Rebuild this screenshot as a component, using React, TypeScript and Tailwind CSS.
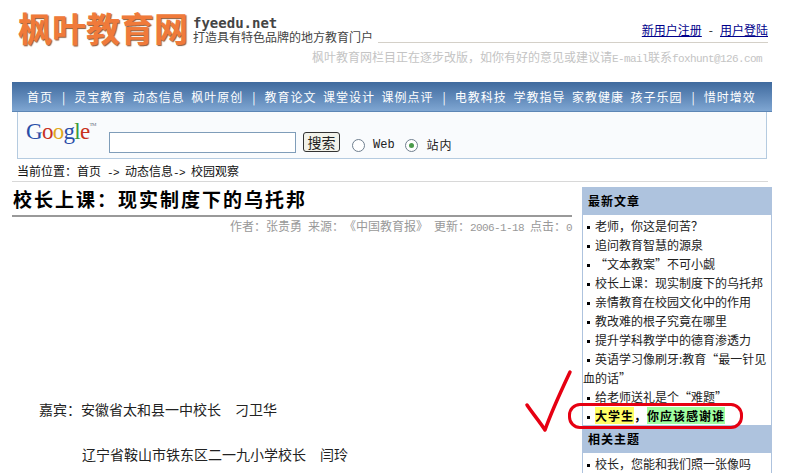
const cjk = "font-['SimSun','Noto_Sans_CJK_SC',sans-serif]";

const navGroups = [
  ["首页"],
  ["灵宝教育", "动态信息", "枫叶原创"],
  ["教育论文", "课堂设计", "课例点评"],
  ["电教科技", "学教指导", "家教健康", "孩子乐园"],
  ["惜时增效"],
];

const latest = [
  "老师，你这是何苦？",
  "追问教育智慧的源泉",
  "“文本教案”不可小觑",
  "校长上课：现实制度下的乌托邦",
  "亲情教育在校园文化中的作用",
  "教改难的根子究竟在哪里",
  "提升学科教学中的德育渗透力",
  "英语学习像刷牙:教育“最一针见血的话”",
  "给老师送礼是个“难题”",
];

// half-width latin, 6px per character like the old bitmap font
function M({ children }: { children: string }) {
  return <span className="whitespace-pre font-['Liberation_Mono',monospace] text-[11px] leading-none tracking-[-0.6px]">{children}</span>;
}

function Bullet() {
  return <span className="mr-[5px] ml-[4px] inline-block h-[3px] w-[3px] bg-black align-middle" />;
}

function Radio({ checked }: { checked?: boolean }) {
  return (
    <span className="flex h-[13px] w-[13px] items-center justify-center rounded-full border border-[#6f7f8f] bg-white">
      {checked && <span className="h-[5px] w-[5px] rounded-full bg-[#4a9a4a]" />}
    </span>
  );
}

function Google() {
  return (
    <div className="flex w-[70px] items-start font-['Liberation_Serif',serif] text-[23px] leading-[28px] tracking-[-0.7px]">
      <span className="text-[#2a4fa8]">G</span>
      <span className="text-[#c8321e]">o</span>
      <span className="text-[#e0a820]">o</span>
      <span className="text-[#2a4fa8]">g</span>
      <span className="text-[#3a9a3a]">l</span>
      <span className="text-[#c8321e]">e</span>
      <span className="mt-[4px] text-[5px] leading-[6px] text-gray-500">TM</span>
    </div>
  );
}

export default function App() {
  return (
    <div className={`relative h-[473px] w-[785px] overflow-hidden bg-white text-[12px] text-[#222] [text-spacing-trim:space-all] ${cjk}`}>
      {/* header */}
      <div className="flex h-[82px] flex-col">
        <div className="flex h-[43px] items-start pl-[18px] pt-[9px]">
          <div className="w-[170px] whitespace-nowrap text-[34px] font-bold leading-[38px] text-[#f07a3a] [text-shadow:1px_1px_1px_#8a5a3a]">
            枫叶教育网
          </div>
          <div className="ml-[5px] flex w-[185px] flex-col">
            <span className="mt-[7px] font-['DejaVu_Sans_Mono',monospace] text-[14px] font-bold leading-[14px] text-[#444]">
              fyeedu.net
            </span>
            <span className="text-[12px] leading-[13px] text-[#444]">打造具有特色品牌的地方教育门户</span>
          </div>
          <div className="mt-[12px] flex h-[22px] w-[390px] items-start justify-end border-b border-[#d4d0c8]">
            <span className="leading-[17px] text-[#00008b] underline">新用户注册</span>
            <span className="mx-[7px] leading-[17px]">-</span>
            <span className="leading-[17px] text-[#00008b] underline">用户登陆</span>
          </div>
        </div>
        <div className="mt-[6px] h-[16px] pl-[312px] text-[12px] leading-[16px] text-[#c4c4c4]">
          枫叶教育网栏目正在逐步改版，如你有好的意见或建议请<M>E-mail</M>联系<M>foxhunt@126.com</M>
        </div>
      </div>

      {/* nav */}
      <div className="ml-[12px] flex h-[30px] w-[760px] items-center gap-[9px] border-b border-[#5d86b5] bg-gradient-to-b from-[#3f6a9e] to-[#7fa6d2] pl-[15px] tracking-[1px] text-white">
        {navGroups.map((group, i) => (
          <div key={i} className="flex items-center gap-[9px]">
            {i > 0 && <span className="tracking-normal">|</span>}
            <div className="flex gap-[6.5px]">
              {group.map((item) => (
                <span key={item}>{item}</span>
              ))}
            </div>
          </div>
        ))}
      </div>

      {/* search */}
      <div className="ml-[17px] flex h-[47px] w-[750px] items-start border border-t-0 border-[#b5cbe0] bg-[#f9fbfd] pl-[8px] pt-[6px]">
        <Google />
        <input className="ml-[13px] mt-[14px] h-[21px] w-[187px] border border-[#7f9db9] bg-white" />
        <button className="ml-[7px] mt-[14px] h-[20px] w-[37px] rounded-[3px] border border-[#333] bg-[#f2f2ea] text-[14px] leading-[16px]">
          搜索
        </button>
        <div className="ml-[12px] mt-[18px] flex items-center">
          <Radio />
          <span className="ml-[8px] font-['Liberation_Mono',monospace] text-[12px]">Web</span>
          <span className="ml-[10px]">
            <Radio checked />
          </span>
          <span className="ml-[9px] tracking-[1px]">站内</span>
        </div>
      </div>

      {/* breadcrumb */}
      <div className="ml-[17px] mt-[3px] h-[18px] text-[12px] leading-[18px] text-[#111]">
        当前位置：首页<M> -&gt; </M>动态信息<M>-&gt; </M>校园观察
      </div>
      <div className="ml-[12px] mt-[1px] h-px w-[756px] bg-[#d8d8d8]" />

      {/* main */}
      <div className="ml-[12px] mt-[5px] flex items-start gap-[10px]">
        <div className="w-[560px]">
          <h1 className="h-[28px] pl-px text-[19px] font-bold leading-[24px] tracking-[2px] text-black">
            校长上课：现实制度下的乌托邦
          </h1>
          <div className="h-[2px] bg-[#999]" />
          <div className="h-[17px] pt-[1px] text-right text-[12px] leading-[16px] text-[#999]">
            作者：张贵勇<M> </M>来源：《中国教育报》<M> </M>更新：<M>2006-1-18 </M>点击：<M>0</M>
          </div>
          <p className="ml-[27px] mt-[165px] text-[14px] leading-[20px] text-[#222]">嘉宾：安徽省太和县一中校长　刁卫华</p>
          <p className="ml-[70px] mt-[25px] text-[14px] leading-[20px] text-[#222]">辽宁省鞍山市铁东区二一九小学校长　闫玲</p>
        </div>

        <aside className="w-[190px] border-x border-[#aec3de]">
          <h2 className="h-[28px] bg-[#aec3de] pl-[5px] text-[12px] font-bold leading-[28px] tracking-[1px] text-black">最新文章</h2>
          <ul className="pt-[1px] text-[12px] leading-[19px] text-[#222]">
            {latest.map((t) => (
              <li key={t}>
                <Bullet />
                {t}
              </li>
            ))}
            <li className="font-bold tracking-[1px] text-black">
              <Bullet />
              <span className="bg-[#ffff66]">大学生</span>，<span className="bg-[#a0ffa0]">你应该感谢谁</span>
            </li>
          </ul>
          <h2 className="h-[28px] bg-[#aec3de] pl-[5px] text-[12px] font-bold leading-[28px] tracking-[1px] text-black">相关主题</h2>
          <ul className="pt-[1px] text-[12px] leading-[19px] text-[#222]">
            <li>
              <Bullet />
              校长，您能和我们照一张像吗
            </li>
          </ul>
        </aside>
      </div>

      {/* hand-drawn annotation */}
      <svg className="absolute left-[520px] top-[365px]" width="60" height="72" viewBox="0 0 60 72" fill="none">
        <path d="M7 40 C13 49 20 57 25 65 C32 45 42 24 50 7" stroke="#e60012" strokeWidth="3.5" strokeLinecap="round" strokeLinejoin="round" />
      </svg>
      <div className="absolute left-[568px] top-[403px] h-[26px] w-[175px] rounded-[12px] border-[3px] border-[#e60012]" />
    </div>
  );
}
